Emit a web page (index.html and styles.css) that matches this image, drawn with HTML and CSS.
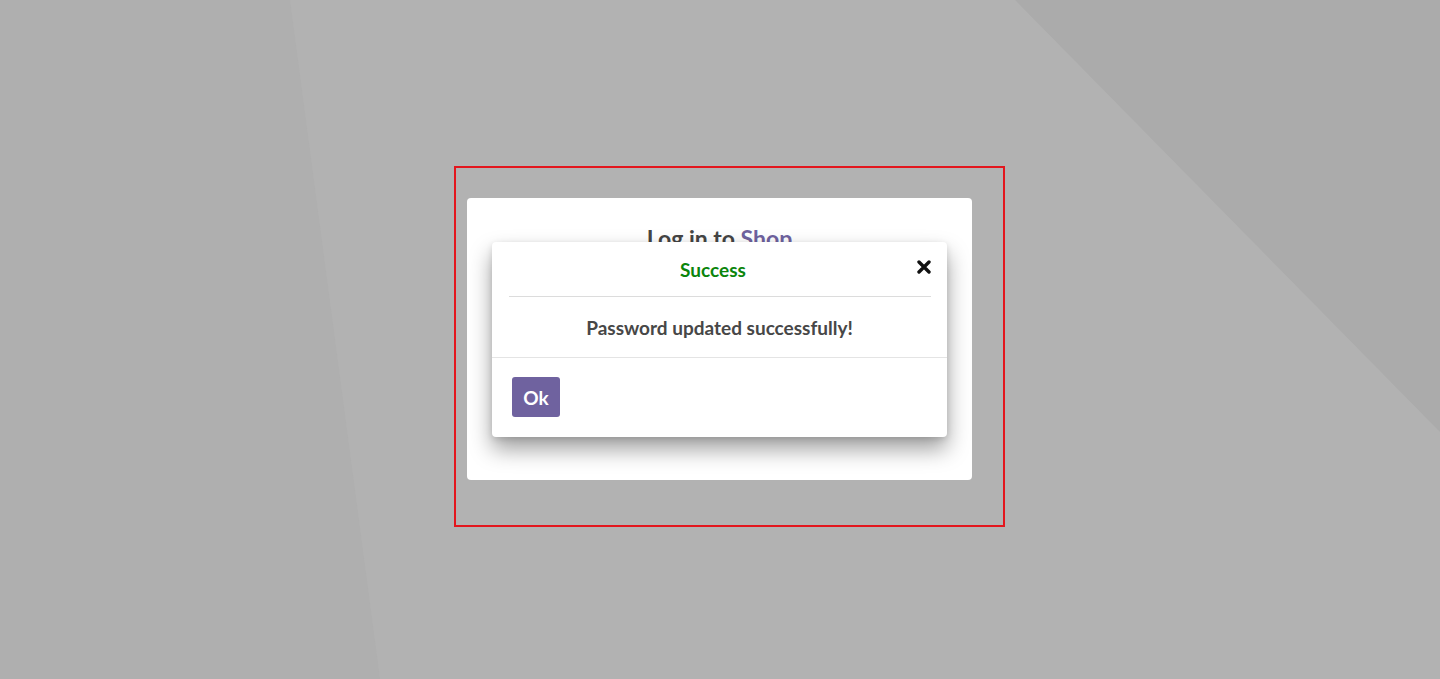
FILE: index.html
```html
<!DOCTYPE html>
<html lang="en">
<head>
<meta charset="utf-8">
<title>Log in to Shop</title>
<link rel="stylesheet" href="styles.css">
</head>
<body>
<div class="bg-left"></div>
<div class="bg-right"></div>
<div class="stage">
  <div class="frame">
    <div class="card">
      <h1 class="card-title">Log in to <span class="brand">Shop</span></h1>
      <div class="modal">
        <div class="modal-header">
          <h2 class="modal-title">Success</h2>
          <button class="modal-close" aria-label="Close">
            <svg width="14" height="14" viewBox="0 0 14 14"><path d="M2 2 L12 12 M12 2 L2 12" stroke="#111" stroke-width="3.4" stroke-linecap="round"/></svg>
          </button>
        </div>
        <div class="modal-body">Password updated successfully!</div>
        <div class="modal-footer">
          <button class="btn-ok">Ok</button>
        </div>
      </div>
    </div>
  </div>
</div>
</body>
</html>
```
FILE: styles.css
```css
html, body {
  margin: 0;
  padding: 0;
}
body {
  width: 1440px;
  height: 679px;
  overflow: hidden;
  background: #b2b2b2;
  font-family: Lato, "Open Sans", sans-serif;
  position: relative;
}
.bg-left {
  position: absolute;
  inset: 0;
  background: #afafaf;
  clip-path: polygon(0 0, 290px 0, 380px 679px, 0 679px);
}
.bg-right {
  position: absolute;
  inset: 0;
  background: #ababab;
  clip-path: polygon(1015px 0, 1440px 0, 1440px 432px);
}
.stage {
  position: relative;
  padding: 166px 0 0 454px;
}
.frame {
  width: 547px;
  height: 357px;
  border: 2px solid #e3161d;
  box-sizing: content-box;
}
.card {
  position: relative;
  margin: 30px 0 0 11px;
  width: 505px;
  height: 282px;
  background: #fff;
  border-radius: 4px;
  overflow: hidden;
}
.card-title {
  margin: 0;
  padding-top: 26px;
  text-align: center;
  font-size: 23px;
  font-weight: 700;
  color: #454545;
  line-height: 28px;
}
.brand {
  color: #6f629f;
}
.modal {
  position: absolute;
  left: 25px;
  top: 44px;
  width: 455px;
  background: #fff;
  border-radius: 4px;
  box-shadow: 0 12px 22px rgba(0, 0, 0, 0.38), 0 2px 6px rgba(0, 0, 0, 0.12);
}
.modal-header {
  display: flex;
  align-items: center;
  margin: 0 16px 0 17px;
  height: 54px;
  border-bottom: 1px solid #dcdcdc;
}
.modal-title {
  flex: 1;
  margin: 0;
  text-align: center;
  font-size: 19px;
  font-weight: 700;
  color: #0b850b;
  padding-top: 1px;
}
.modal-close {
  border: 0;
  background: none;
  padding: 0;
  width: 14px;
  height: 14px;
  margin-top: -5px;
  display: flex;
}
.modal-body {
  height: 61px;
  display: flex;
  align-items: center;
  justify-content: center;
  font-size: 19px;
  font-weight: 700;
  color: #474747;
  border-bottom: 1px solid #e4e4e4;
  padding-top: 1px;
  box-sizing: border-box;
}
.modal-footer {
  padding: 19px 20px 20px;
}
.btn-ok {
  width: 48px;
  height: 40px;
  border: 0;
  border-radius: 3px;
  background: #6f629f;
  color: #fff;
  font-family: Lato, "Open Sans", sans-serif;
  font-size: 19px;
  font-weight: 700;
  padding: 0;
  display: block;
}
```
